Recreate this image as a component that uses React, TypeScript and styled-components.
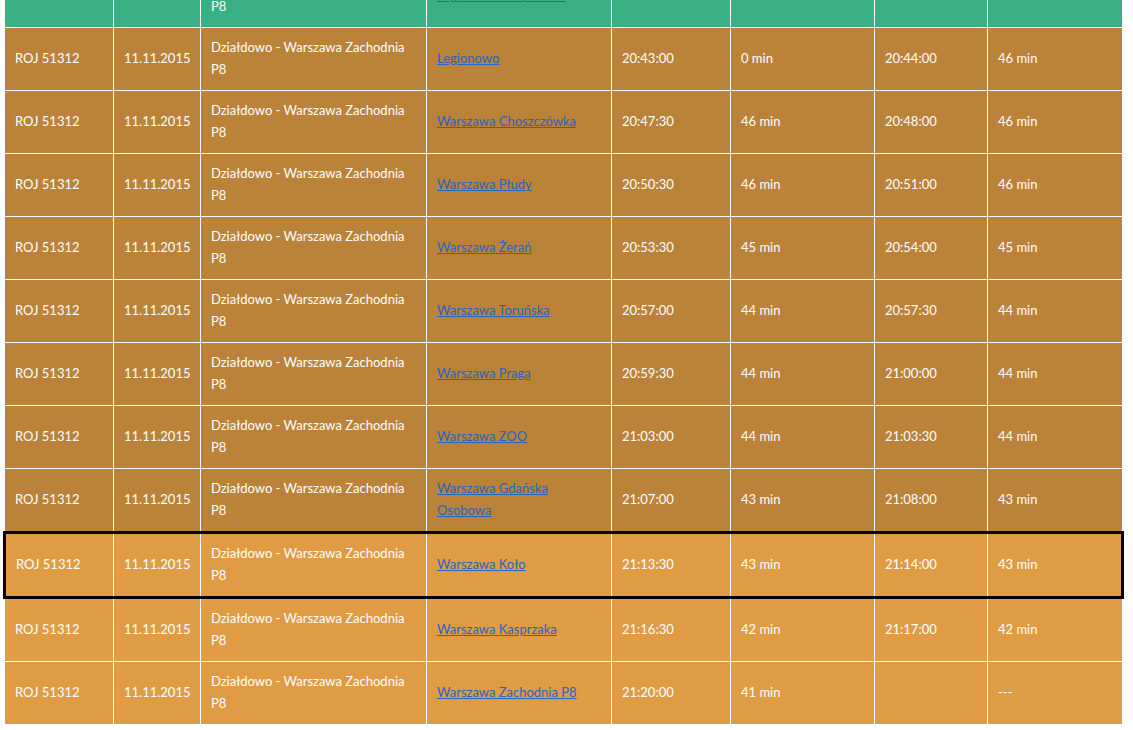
import styled, { createGlobalStyle } from "styled-components";

const GlobalStyle = createGlobalStyle`
  html, body {
    margin: 0;
    padding: 0;
    background: #ffffff;
    font-family: Lato, "Open Sans", "Liberation Sans", sans-serif;
  }
`;

type Tone = "green" | "brown" | "orange";

const tones: Record<Tone, string> = {
  green: "#39b083",
  brown: "#bb8239",
  orange: "#df9c45",
};

type Stop = {
  tone: Tone;
  station: string;
  arrival: string;
  arrivalDelay: string;
  departure: string;
  departureDelay: string;
  current?: boolean;
};

const stops: Stop[] = [
  { tone: "green", station: "Legionowo Przystanek", arrival: "20:40:30", arrivalDelay: "0 min", departure: "20:41:00", departureDelay: "0 min" },
  { tone: "brown", station: "Legionowo", arrival: "20:43:00", arrivalDelay: "0 min", departure: "20:44:00", departureDelay: "46 min" },
  { tone: "brown", station: "Warszawa Choszczówka", arrival: "20:47:30", arrivalDelay: "46 min", departure: "20:48:00", departureDelay: "46 min" },
  { tone: "brown", station: "Warszawa Płudy", arrival: "20:50:30", arrivalDelay: "46 min", departure: "20:51:00", departureDelay: "46 min" },
  { tone: "brown", station: "Warszawa Żerań", arrival: "20:53:30", arrivalDelay: "45 min", departure: "20:54:00", departureDelay: "45 min" },
  { tone: "brown", station: "Warszawa Toruńska", arrival: "20:57:00", arrivalDelay: "44 min", departure: "20:57:30", departureDelay: "44 min" },
  { tone: "brown", station: "Warszawa Praga", arrival: "20:59:30", arrivalDelay: "44 min", departure: "21:00:00", departureDelay: "44 min" },
  { tone: "brown", station: "Warszawa ZOO", arrival: "21:03:00", arrivalDelay: "44 min", departure: "21:03:30", departureDelay: "44 min" },
  { tone: "brown", station: "Warszawa Gdańska Osobowa", arrival: "21:07:00", arrivalDelay: "43 min", departure: "21:08:00", departureDelay: "43 min" },
  { tone: "orange", station: "Warszawa Koło", arrival: "21:13:30", arrivalDelay: "43 min", departure: "21:14:00", departureDelay: "43 min", current: true },
  { tone: "orange", station: "Warszawa Kasprzaka", arrival: "21:16:30", arrivalDelay: "42 min", departure: "21:17:00", departureDelay: "42 min" },
  { tone: "orange", station: "Warszawa Zachodnia P8", arrival: "21:20:00", arrivalDelay: "41 min", departure: "", departureDelay: "---" },
];

const colWidths = [109, 87, 226, 185, 119, 144, 113, 135];

const Page = styled.div`
  height: 730px;
  overflow: hidden;
  padding-left: 3px;
`;

const Timetable = styled.table`
  border-collapse: collapse;
  table-layout: fixed;
  width: 1118px;
  margin-top: -36px;
  font-size: 13px;
  color: #ffffff;
`;

const Row = styled.tr<{ $tone: Tone; $current?: boolean }>`
  background: ${(p) => tones[p.$tone]};
  border: ${(p) => (p.$current ? "3px solid #000" : "none")};
`;

const Cell = styled.td`
  border: 1px solid #ffffff;
  padding: 8px 10px 10px 10px;
  line-height: 22px;
  vertical-align: middle;
  text-align: left;
`;

const StationLink = styled.a`
  color: #2466bf;
  text-decoration: underline;
`;

export default function App() {
  return (
    <Page>
      <GlobalStyle />
      <Timetable>
        <colgroup>
          {colWidths.map((w, i) => (
            <col key={i} style={{ width: w }} />
          ))}
        </colgroup>
        <tbody>
          {stops.map((s, i) => (
            <Row key={i} $tone={s.tone} $current={s.current}>
              <Cell>ROJ 51312</Cell>
              <Cell>11.11.2015</Cell>
              <Cell>Działdowo - Warszawa Zachodnia P8</Cell>
              <Cell>
                <StationLink href="#">{s.station}</StationLink>
              </Cell>
              <Cell>{s.arrival}</Cell>
              <Cell>{s.arrivalDelay}</Cell>
              <Cell>{s.departure}</Cell>
              <Cell>{s.departureDelay}</Cell>
            </Row>
          ))}
        </tbody>
      </Timetable>
    </Page>
  );
}
